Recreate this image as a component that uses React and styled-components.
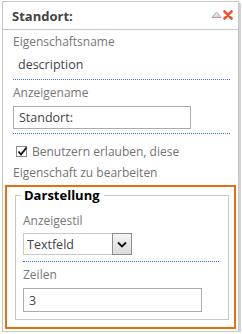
import styled, { createGlobalStyle } from "styled-components";

const GlobalStyle = createGlobalStyle`
  html, body {
    margin: 0;
    padding: 0;
    background: #ffffff;
  }
  body {
    font-family: "Open Sans", "Liberation Sans", sans-serif;
    font-size: 12px;
  }
`;

const Panel = styled.div`
  width: 237px;
  margin: 1px 0 0 2px;
  box-sizing: border-box;
  border: 1px solid #c6c6c6;
  box-shadow: 2px 2px 0 #d2d2d2;
  background: #fff;
`;

const Header = styled.div`
  height: 27px;
  border-bottom: 1px solid #c6c6c6;
  display: flex;
  align-items: center;
  justify-content: space-between;
  padding: 0 5px 0 9px;
  h2 {
    margin: 0;
    font-size: 13px;
    font-weight: bold;
    color: #444;
  }
`;

const Tools = styled.div`
  display: flex;
  align-items: center;
  gap: 1px;
  margin-top: -2px;
`;

const Body = styled.div`
  padding: 0 2px 2px;
`;

// label above a field; $inner drops the side padding inside the group box
const Label = styled.div`
  padding: ${(p) => (p.$inner ? "0" : "0 6px 0 8px")};
  line-height: 18px;
  margin-top: ${(p) => p.$top ?? 4}px;
  color: #777;
`;

const Field = styled.div`
  margin: ${(p) => p.$top ?? 4}px ${(p) => (p.$inner ? "0 0 0" : "6px 0 8px")};
  padding: 0 0 ${(p) => p.$bottom ?? 4}px ${(p) => p.$indent || 0}px;
  border-bottom: 1px dotted #3b73d9;
`;

const Value = styled.div`
  line-height: 18px;
  color: #444;
  font-size: 12.5px;
`;

const TextBox = styled.div`
  box-sizing: border-box;
  width: ${(p) => p.$width}px;
  height: ${(p) => p.$height}px;
  margin-top: ${(p) => p.$top || 0}px;
  border: 1px solid #ababab;
  padding: 0 5px;
  display: flex;
  align-items: center;
  color: #444;
  font-size: 12.5px;
`;

const CheckRow = styled.div`
  margin: 7px 6px 0 8px;
  line-height: 21px;
  color: #737373;
`;

const Check = styled.span`
  display: inline-block;
  box-sizing: border-box;
  width: 11px;
  height: 11px;
  margin: 0 5px 0 3px;
  border: 1px solid #8a8a8a;
  background: #fff;
  vertical-align: -1px;
  position: relative;
  svg {
    position: absolute;
    left: 0;
    top: -1px;
  }
`;

const Highlight = styled.div`
  margin-top: 2px;
  border: 2px solid #e5700e;
`;

const Group = styled.fieldset`
  margin: 0 5px 7px 8px;
  padding: 8px 9px 7px 7px;
  border: 1px solid #c8c8c8;
  min-width: 0;
  legend {
    margin-left: -2px;
    padding: 0 4px 0 3px;
    line-height: 17px;
    font-size: 13px;
    font-weight: bold;
    color: #000;
  }
`;

const Select = styled.div`
  box-sizing: border-box;
  width: 109px;
  height: 22px;
  border: 1px solid #c8c8c8;
  display: flex;
  color: #444;
  font-size: 12.5px;
  span {
    flex: 1;
    padding-left: 3px;
    display: flex;
    align-items: center;
  }
`;

const DropButton = styled.div`
  box-sizing: border-box;
  width: 20px;
  margin: -1px -1px -1px 0;
  border: 1px solid #8e8e8e;
  background: linear-gradient(#f4f4f4, #dcdcdc);
  display: flex;
  align-items: center;
  justify-content: center;
`;

export default function App() {
  return (
    <>
      <GlobalStyle />
      <Panel>
        <Header>
          <h2>Standort:</h2>
          <Tools>
            <svg width="11" height="8" viewBox="0 0 11 8">
              <defs>
                <linearGradient id="tri" x1="0" y1="0" x2="0" y2="1">
                  <stop offset="0" stopColor="#f4f4f4" />
                  <stop offset="1" stopColor="#d6d6d6" />
                </linearGradient>
              </defs>
              <path d="M5.5 1 L10 6.5 H1 Z" fill="url(#tri)" stroke="#a8a8a8" strokeWidth="1" />
            </svg>
            <svg width="10" height="10" viewBox="0 0 10 10">
              <path d="M1.5 1.5 L8.5 8.5 M8.5 1.5 L1.5 8.5" stroke="#f0522e" strokeWidth="2.6" strokeLinecap="round" />
            </svg>
          </Tools>
        </Header>
        <Body>
          <Label $top={3}>Eigenschaftsname</Label>
          <Field $top={5} $bottom={5} $indent={5}>
            <Value>description</Value>
          </Field>
          <Label>Anzeigename</Label>
          <Field>
            <TextBox $width={178} $height={23}>Standort:</TextBox>
          </Field>
          <CheckRow>
            <Check>
              <svg width="11" height="11" viewBox="0 0 11 11">
                <path d="M1.5 5.5 L4 8.5 L9.5 1.5" fill="none" stroke="#111" strokeWidth="1.8" />
              </svg>
            </Check>
            Benutzern erlauben, diese
            <br />
            Eigenschaft zu bearbeiten
          </CheckRow>
          <Highlight>
            <Group>
              <legend>Darstellung</legend>
              <Label $inner $top={0}>Anzeigestil</Label>
              <Field $inner $top={3} $bottom={6}>
                <Select>
                  <span>Textfeld</span>
                  <DropButton>
                    <svg width="10" height="7" viewBox="0 0 10 7">
                      <path d="M1 1.5 L5 5.5 L9 1.5" fill="none" stroke="#111" strokeWidth="1.8" />
                    </svg>
                  </DropButton>
                </Select>
              </Field>
              <Label $inner>Zeilen</Label>
              <TextBox $width={179} $height={24} $top={4}>3</TextBox>
            </Group>
          </Highlight>
        </Body>
      </Panel>
    </>
  );
}
